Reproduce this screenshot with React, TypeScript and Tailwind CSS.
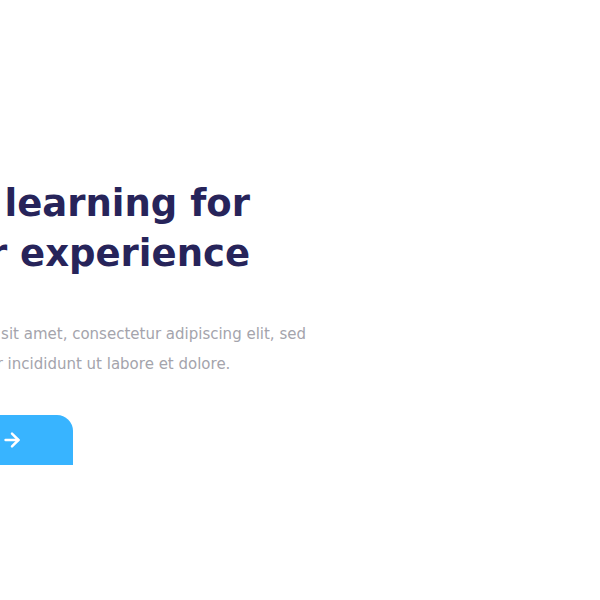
import { ArrowRight } from 'lucide-react';

export default function App() {
  return (
    <div className="h-[600px] w-full overflow-hidden bg-white pt-[179px] font-['DejaVu_Sans',sans-serif]">
      <div className="-ml-[144px] flex flex-col items-start">
        <h1 className="w-[394px] text-right text-[37px] font-bold leading-[50px] text-[#27245a]">
          Online learning for
          <br />
          better experience
        </h1>
        <p className="mt-[40px] text-[15px] leading-[30px] text-[#a4a4ac]">
          Lorem ipsum dolor sit amet, consectetur adipiscing elit, sed
          <br />
          do eiusmod tempor incididunt ut labore et dolore.
        </p>
        <button className="mt-[36px] flex h-[50px] w-[217px] items-center justify-end gap-3 rounded-tr-[16px] bg-[#38b4ff] pr-[50px] text-[15px] font-bold text-white">
          Get Started
          <ArrowRight size={22} strokeWidth={2.7} />
        </button>
      </div>
    </div>
  );
}
